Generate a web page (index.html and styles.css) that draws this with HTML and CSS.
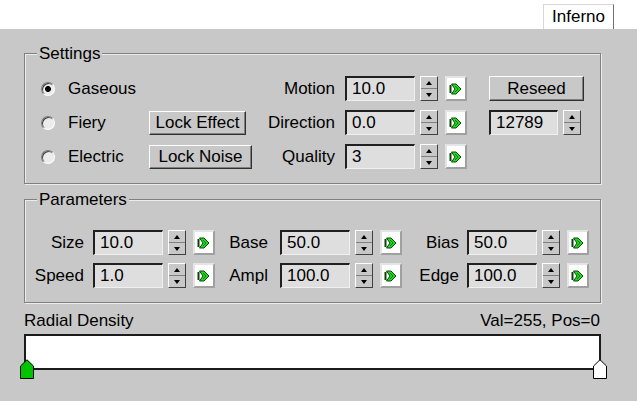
FILE: index.html
```html
<!DOCTYPE html>
<html>
<head>
<meta charset="utf-8">
<title>Inferno</title>
<link rel="stylesheet" href="styles.css">
</head>
<body>
<div class="tabbar"><div class="tab">Inferno</div></div>
<div class="panel">
  <div class="group settings">
    <div class="group-title">Settings</div>
    <div class="settings-grid">
      <label class="radio-item"><span class="radio checked"></span>Gaseous</label>
      <span></span>
      <span class="flabel">Motion</span>
      <div class="field">10.0</div>
      <div class="spin"><span class="up"></span><span class="dn"></span></div>
      <div class="key"><svg viewBox="0 0 14 14" width="14" height="14"><path d="M1.5 3v8" stroke="#0b3f0b" stroke-width="2"/><path d="M2.5 2h4.5l5 5-5 5H2.5l3.5-5z" fill="#22d622" stroke="#0a4a0a"/><path d="M6 4l3 3-3 3" fill="none" stroke="#0c7c0c"/></svg></div>
      <button class="btn reseed">Reseed</button>

      <label class="radio-item"><span class="radio"></span>Fiery</label>
      <button class="btn lock-effect">Lock Effect</button>
      <span class="flabel">Direction</span>
      <div class="field">0.0</div>
      <div class="spin"><span class="up"></span><span class="dn"></span></div>
      <div class="key"><svg viewBox="0 0 14 14" width="14" height="14"><path d="M1.5 3v8" stroke="#0b3f0b" stroke-width="2"/><path d="M2.5 2h4.5l5 5-5 5H2.5l3.5-5z" fill="#22d622" stroke="#0a4a0a"/><path d="M6 4l3 3-3 3" fill="none" stroke="#0c7c0c"/></svg></div>
      <div class="seed"><div class="field seedfield">12789</div><div class="spin"><span class="up"></span><span class="dn"></span></div></div>

      <label class="radio-item"><span class="radio"></span>Electric</label>
      <button class="btn lock-noise">Lock Noise</button>
      <span class="flabel">Quality</span>
      <div class="field">3</div>
      <div class="spin"><span class="up"></span><span class="dn"></span></div>
      <div class="key"><svg viewBox="0 0 14 14" width="14" height="14"><path d="M1.5 3v8" stroke="#0b3f0b" stroke-width="2"/><path d="M2.5 2h4.5l5 5-5 5H2.5l3.5-5z" fill="#22d622" stroke="#0a4a0a"/><path d="M6 4l3 3-3 3" fill="none" stroke="#0c7c0c"/></svg></div>
      <span></span>
    </div>
  </div>

  <div class="group params">
    <div class="group-title">Parameters</div>
    <div class="params-grid">
      <span class="plabel c1">Size</span>
      <div class="field">10.0</div>
      <div class="spin"><span class="up"></span><span class="dn"></span></div>
      <div class="key"><svg viewBox="0 0 14 14" width="14" height="14"><path d="M1.5 3v8" stroke="#0b3f0b" stroke-width="2"/><path d="M2.5 2h4.5l5 5-5 5H2.5l3.5-5z" fill="#22d622" stroke="#0a4a0a"/><path d="M6 4l3 3-3 3" fill="none" stroke="#0c7c0c"/></svg></div>
      <span class="plabel c2">Base</span>
      <div class="field">50.0</div>
      <div class="spin"><span class="up"></span><span class="dn"></span></div>
      <div class="key"><svg viewBox="0 0 14 14" width="14" height="14"><path d="M1.5 3v8" stroke="#0b3f0b" stroke-width="2"/><path d="M2.5 2h4.5l5 5-5 5H2.5l3.5-5z" fill="#22d622" stroke="#0a4a0a"/><path d="M6 4l3 3-3 3" fill="none" stroke="#0c7c0c"/></svg></div>
      <span class="plabel c3">Bias</span>
      <div class="field">50.0</div>
      <div class="spin"><span class="up"></span><span class="dn"></span></div>
      <div class="key"><svg viewBox="0 0 14 14" width="14" height="14"><path d="M1.5 3v8" stroke="#0b3f0b" stroke-width="2"/><path d="M2.5 2h4.5l5 5-5 5H2.5l3.5-5z" fill="#22d622" stroke="#0a4a0a"/><path d="M6 4l3 3-3 3" fill="none" stroke="#0c7c0c"/></svg></div>

      <span class="plabel c1">Speed</span>
      <div class="field">1.0</div>
      <div class="spin"><span class="up"></span><span class="dn"></span></div>
      <div class="key"><svg viewBox="0 0 14 14" width="14" height="14"><path d="M1.5 3v8" stroke="#0b3f0b" stroke-width="2"/><path d="M2.5 2h4.5l5 5-5 5H2.5l3.5-5z" fill="#22d622" stroke="#0a4a0a"/><path d="M6 4l3 3-3 3" fill="none" stroke="#0c7c0c"/></svg></div>
      <span class="plabel c2">Ampl</span>
      <div class="field">100.0</div>
      <div class="spin"><span class="up"></span><span class="dn"></span></div>
      <div class="key"><svg viewBox="0 0 14 14" width="14" height="14"><path d="M1.5 3v8" stroke="#0b3f0b" stroke-width="2"/><path d="M2.5 2h4.5l5 5-5 5H2.5l3.5-5z" fill="#22d622" stroke="#0a4a0a"/><path d="M6 4l3 3-3 3" fill="none" stroke="#0c7c0c"/></svg></div>
      <span class="plabel c3">Edge</span>
      <div class="field">100.0</div>
      <div class="spin"><span class="up"></span><span class="dn"></span></div>
      <div class="key"><svg viewBox="0 0 14 14" width="14" height="14"><path d="M1.5 3v8" stroke="#0b3f0b" stroke-width="2"/><path d="M2.5 2h4.5l5 5-5 5H2.5l3.5-5z" fill="#22d622" stroke="#0a4a0a"/><path d="M6 4l3 3-3 3" fill="none" stroke="#0c7c0c"/></svg></div>
    </div>
  </div>

  <div class="curve-head"><span>Radial Density</span><span>Val=255, Pos=0</span></div>
  <div class="curve">
    <svg class="marker m-left" viewBox="0 0 14 20" width="14" height="20"><path d="M0.5 19.5V7L7 0.8 13.5 7v12.5z" fill="#00c400" stroke="#000"/></svg>
    <svg class="marker m-right" viewBox="0 0 14 20" width="14" height="20"><path d="M0.5 19.5V7L7 0.8 13.5 7v12.5z" fill="#fff" stroke="#000"/></svg>
  </div>
</div>
</body>
</html>
```

FILE: styles.css
```css
* { box-sizing: border-box; }
html, body { margin: 0; padding: 0; }
body {
  width: 637px;
  height: 401px;
  overflow: hidden;
  background: #fff;
  font-family: "Liberation Sans", Arial, sans-serif;
  font-size: 17px;
  color: #000;
}

.tabbar {
  height: 29px;
  display: flex;
  justify-content: flex-end;
  align-items: flex-end;
  padding-right: 23px;
}
.tab {
  width: 71px;
  height: 25px;
  line-height: 24px;
  text-align: center;
  background: #fff;
  border-top: 1px solid #d8d8d8;
  border-left: 1px solid #d8d8d8;
  border-right: 1px solid #707070;
}

.panel {
  height: 372px;
  background: #c8c8c8;
  padding: 24px 36px 0 24px;
}

.group {
  position: relative;
  border: 1px solid #808080;
  box-shadow: inset 1px 1px 0 #ececec, 1px 1px 0 #ececec;
}
.group-title {
  position: absolute;
  top: -10px;
  left: 12px;
  padding: 0 2px;
  line-height: 20px;
  background: #c8c8c8;
}

.settings {
  height: 131px;
  padding: 22px 0 0 16px;
}
.settings-grid {
  display: grid;
  grid-template-columns: 108px 103px 93px 70px 30px 44px 95px;
  grid-template-rows: repeat(3, 25px);
  row-gap: 9px;
  align-items: center;
}

.params {
  margin-top: 15px;
  height: 104px;
  padding-top: 30px;
}
.params-grid {
  display: grid;
  grid-template-columns: 68px 70px 30px 22px 65px 70px 30px 22px 65px 70px 30px 22px;
  grid-template-rows: repeat(2, 25px);
  row-gap: 8px;
  align-items: center;
}

.radio-item {
  display: flex;
  align-items: center;
  white-space: nowrap;
}
.radio {
  width: 14px;
  height: 14px;
  margin-right: 13px;
  border-radius: 50%;
  background: #ececec;
  border: 1px solid;
  border-color: #7a7a7a #fff #fff #7a7a7a;
  box-shadow: inset 1px 1px 0 #404040;
}
.radio.checked {
  background: radial-gradient(circle, #000 0 2.6px, #ececec 3.3px);
}

.flabel {
  text-align: right;
  padding-right: 10px;
  white-space: nowrap;
}
.plabel { text-align: right; white-space: nowrap; }
.plabel.c1 { padding-right: 9px; }
.plabel.c2 { padding-right: 12px; }
.plabel.c3 { padding-right: 8px; }

.field {
  width: 70px;
  height: 25px;
  background: #dedede;
  border-style: solid;
  border-width: 2px 1px 1px 2px;
  border-color: #202020 #f0f0f0 #f0f0f0 #202020;
  padding-left: 5px;
  line-height: 22px;
  white-space: nowrap;
  overflow: hidden;
}

.spin {
  width: 18px;
  height: 25px;
  margin-left: 5px;
  display: flex;
  flex-direction: column;
  border: 1px solid;
  border-color: #fff #404040 #404040 #fff;
  background: #c8c8c8;
}
.spin span {
  flex: 1;
  display: flex;
  align-items: center;
  justify-content: center;
}
.spin .up { border-bottom: 1px solid #808080; }
.spin .up::before {
  content: "";
  border-left: 3.5px solid transparent;
  border-right: 3.5px solid transparent;
  border-bottom: 4px solid #000;
}
.spin .dn::before {
  content: "";
  border-left: 3.5px solid transparent;
  border-right: 3.5px solid transparent;
  border-top: 4px solid #000;
}

.key {
  width: 22px;
  height: 25px;
  display: flex;
  align-items: center;
  justify-content: center;
  background: #fff;
  border: 2px solid;
  border-color: #e4e4e4 #a0a0a0 #a0a0a0 #e4e4e4;
}

.btn {
  font: inherit;
  color: #000;
  height: 25px;
  padding: 0;
  background: #c8c8c8;
  border: 1px solid;
  border-color: #fff #303030 #303030 #fff;
  box-shadow: inset -1px -1px 0 #808080;
  line-height: 22px;
  white-space: nowrap;
}
.reseed { width: 95px; }
.lock-effect { width: 97px; height: 24px; }
.lock-noise { width: 103px; height: 24px; }

.seed { display: flex; align-items: center; }
.seedfield { width: 69px; }

.curve-head {
  margin-top: 8px;
  height: 20px;
  line-height: 20px;
  display: flex;
  justify-content: space-between;
  padding-right: 1px;
}
.curve {
  position: relative;
  margin-top: 3px;
  height: 36px;
  background: #fff;
  border: 2px solid #1c1c1c;
}
.marker { position: absolute; top: 23px; }
.m-left { left: -6px; }
.m-right { left: 567px; }
```
